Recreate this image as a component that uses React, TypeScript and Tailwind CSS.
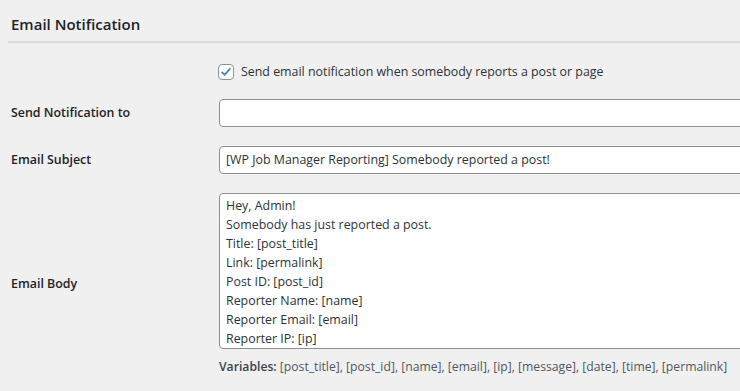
import React from "react";

const bodyLines = [
  "Hey, Admin!",
  "Somebody has just reported a post.",
  "Title: [post_title]",
  "Link: [permalink]",
  "Post ID: [post_id]",
  "Reporter Name: [name]",
  "Reporter Email: [email]",
  "Reporter IP: [ip]",
];

export default function App() {
  return (
    <div className="w-[740px] h-[391px] overflow-hidden bg-[#f0f0f1] font-['Open_Sans',sans-serif] text-[12.4px] text-[#2c3338]">
      <h2 className="pl-[11px] pt-[14px] h-[41px] text-[15px] leading-[20px] font-semibold text-[#1d2327]">
        Email Notification
      </h2>
      <div className="ml-[8px] h-[2px] bg-[#dcdcde]" />

      <div className="mt-[19px] flex items-center h-[20px]">
        <div className="w-[218px] shrink-0" />
        <span className="w-[16px] h-[16px] shrink-0 rounded-[4px] border border-[#8c8f94] bg-white flex items-center justify-center">
          <svg width="14" height="14" viewBox="0 0 20 20">
            <path d="M4.5 10.5 L8.2 14 L15.5 5.5" fill="none" stroke="#3582c4" strokeWidth="2.4" strokeLinecap="round" strokeLinejoin="round" />
          </svg>
        </span>
        <span className="ml-[7px] leading-[20px]">Send email notification when somebody reports a post or page</span>
      </div>

      <div className="mt-[17px] flex items-center h-[28px]">
        <div className="w-[219px] shrink-0 pl-[11px] font-semibold text-[#1d2327]">Send Notification to</div>
        <div className="w-[600px] shrink-0 h-[28px] rounded-[4px] border border-[#8c8f94] bg-white" />
      </div>

      <div className="mt-[19px] flex items-center h-[28px]">
        <div className="w-[219px] shrink-0 pl-[11px] font-semibold text-[#1d2327]">Email Subject</div>
        <div className="w-[600px] shrink-0 h-[28px] rounded-[4px] border border-[#8c8f94] bg-white px-[6px] flex items-center leading-[20px]">
          [WP Job Manager Reporting] Somebody reported a post!
        </div>
      </div>

      <div className="mt-[19px] flex items-center">
        <div className="w-[219px] shrink-0 pl-[11px] font-semibold text-[#1d2327]">Email Body</div>
        <div className="flex flex-col shrink-0">
          <div className="w-[600px] h-[156px] overflow-hidden rounded-[4px] border border-[#8c8f94] bg-white px-[6px] pt-[2px] leading-[19px]">
            {bodyLines.map((l) => (
              <div key={l}>{l}</div>
            ))}
          </div>
          <div className="mt-[9px] leading-[18px] text-[#50575e] text-[12.2px] whitespace-nowrap">
            <span className="font-semibold text-[#3c434a]">Variables:</span> [post_title], [post_id], [name], [email], [ip], [message], [date], [time], [permalink]
          </div>
        </div>
      </div>
    </div>
  );
}
